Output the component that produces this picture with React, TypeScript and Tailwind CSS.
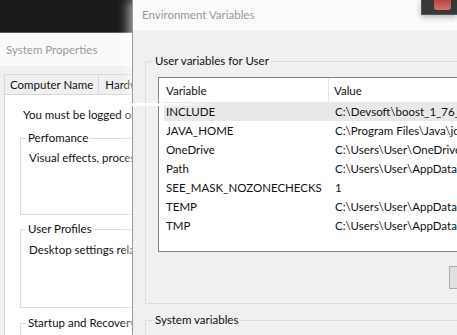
const font = { fontFamily: 'Lato, "Noto Sans", sans-serif' };

const userVars = [
  { name: "INCLUDE", value: "C:\\Devsoft\\boost_1_76_0", selected: true },
  { name: "JAVA_HOME", value: "C:\\Program Files\\Java\\jdk" },
  { name: "OneDrive", value: "C:\\Users\\User\\OneDrive" },
  { name: "Path", value: "C:\\Users\\User\\AppData\\Local" },
  { name: "SEE_MASK_NOZONECHECKS", value: "1" },
  { name: "TEMP", value: "C:\\Users\\User\\AppData\\Local" },
  { name: "TMP", value: "C:\\Users\\User\\AppData\\Local" },
];

function SystemProperties() {
  return (
    <div className="absolute left-0 top-[32px] flex w-[220px] flex-col border-t border-[#5a5a5a] bg-[#f0f0f0]">
      <div className="flex h-[33px] shrink-0 items-center bg-[#fafafa] pl-[6px] text-[11.5px] text-[#999]">
        System Properties
      </div>
      <div className="flex flex-col pl-[4px] pt-[8px]">
        <div className="flex h-[20px] whitespace-nowrap text-[11.5px] text-[#111]">
          <div className="flex items-center border border-b-0 border-[#d9d9d9] px-[5px]">
            Computer Name
          </div>
          <div className="flex items-center border-r border-t border-[#d9d9d9] px-[6px]">
            Hardware
          </div>
        </div>
        <div className="flex h-[260px] flex-col border border-[#d9d9d9] bg-white pl-[15px] pt-[11px] text-[11.5px] text-[#111]">
          <div className="h-[18px] shrink-0 whitespace-nowrap pl-[3px] leading-[18px]">
            You must be logged on as an Administrator
          </div>
          <fieldset className="mt-[5px] h-[86px] shrink-0 border border-[#dcdcdc]">
            <legend className="ml-[5px] px-[2px] leading-[18px]">Perfomance</legend>
            <div className="mt-[2px] whitespace-nowrap pl-[8px] leading-[18px]">
              Visual effects, processor scheduling
            </div>
          </fieldset>
          <fieldset className="mt-[5px] h-[88px] shrink-0 border border-[#dcdcdc]">
            <legend className="ml-[5px] px-[2px] leading-[18px]">User Profiles</legend>
            <div className="mt-[3px] whitespace-nowrap pl-[8px] leading-[18px]">
              Desktop settings related to your sign-in
            </div>
          </fieldset>
          <fieldset className="mt-[6px] h-[60px] shrink-0 border border-[#dcdcdc]">
            <legend className="ml-[5px] px-[2px] leading-[18px]">Startup and Recovery</legend>
          </fieldset>
        </div>
      </div>
    </div>
  );
}

function EnvironmentVariables() {
  return (
    <div className="absolute left-[132px] top-0 flex w-[360px] flex-col border-l border-[#9a9a9a] bg-[#f0f0f0] shadow-[-4px_0_10px_rgba(255,255,255,0.6)]">
      <div className="flex h-[30px] shrink-0 items-center bg-[#fbfbfb] pl-[9px] text-[11.5px] text-[#999]">
        Environment Variables
      </div>
      <div className="flex flex-col pl-[12px] pt-[22px] text-[11.5px] text-[#111]">
        <fieldset className="border border-[#dcdcdc] pb-[14px] pl-[12px]">
          <legend className="ml-[-5px] px-[2px] leading-[18px]">User variables for User</legend>
          <div className="mt-[7px] h-[175px] border border-[#828282] bg-white">
            <div className="flex h-[25px] items-center">
              <div className="w-[169px] pl-[7px]">Variable</div>
              <div className="h-full w-px bg-[#e5e5e5]" />
              <div className="pl-[5px]">Value</div>
            </div>
            <div className="mt-[-1px] flex flex-col">
              {userVars.map((v) => (
                <div
                  key={v.name}
                  className={
                    v.selected
                      ? "ml-[5px] flex h-[19px] items-center bg-[#e8e8e8]"
                      : "ml-[5px] flex h-[19px] items-center"
                  }
                >
                  <div className="w-[165px] shrink-0 whitespace-nowrap pl-[2px]">{v.name}</div>
                  <div className="whitespace-nowrap pl-[6px]">{v.value}</div>
                </div>
              ))}
            </div>
          </div>
          <div className="mt-[14px] flex pl-[291px]">
            <div className="h-[23px] w-[75px] border border-[#adadad] bg-[#e1e1e1]" />
          </div>
        </fieldset>
        <fieldset className="mt-[7px] h-[60px] border border-[#dcdcdc]">
          <legend className="ml-[7px] px-[2px] leading-[18px]">System variables</legend>
        </fieldset>
      </div>
    </div>
  );
}

export default function App() {
  return (
    <div className="relative h-[335px] w-[457px] overflow-hidden bg-[#1b1b1b]" style={font}>
      <SystemProperties />
      <EnvironmentVariables />
      {/* white streak over the first row */}
      <div className="absolute left-[128px] top-[103px] h-[3px] w-[84px] rounded-full bg-gradient-to-r from-white via-white to-transparent" />
      {/* control box of a window behind */}
      <div className="absolute right-0 top-0 h-[15px] w-[36px] border-b border-l border-[#555] bg-[#383838] pl-[12px] shadow-[0_2px_6px_rgba(0,0,0,0.3)]">
        <div className="h-[10px] w-[17px] rounded-b-[3px] bg-gradient-to-b from-[#b84444] to-[#d87070]" />
      </div>
    </div>
  );
}
